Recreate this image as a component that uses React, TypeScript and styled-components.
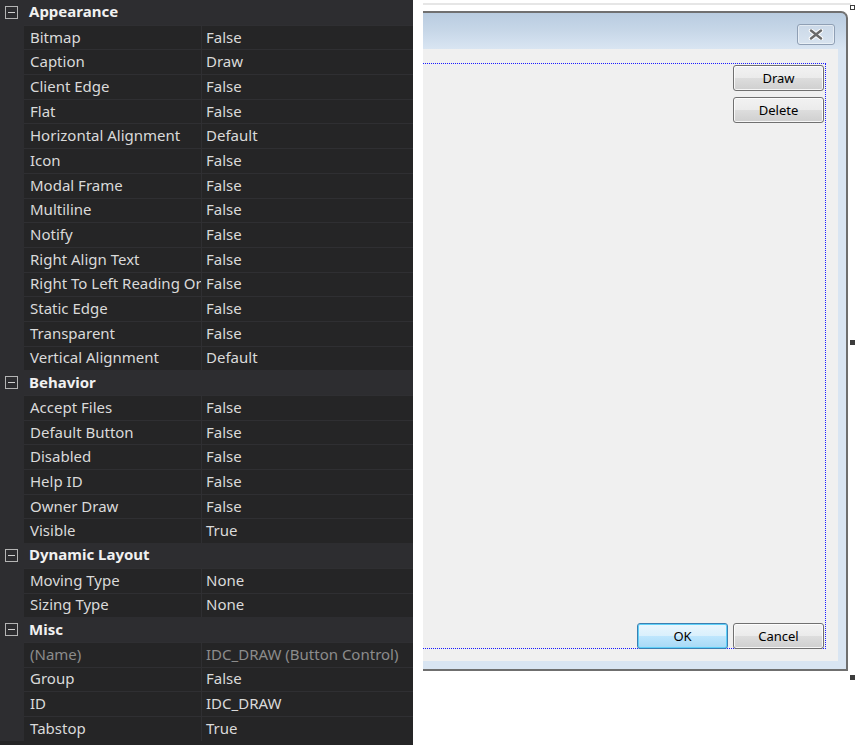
import React from 'react'
import styled, { createGlobalStyle } from 'styled-components'

const GlobalStyle = createGlobalStyle`
  html, body {
    margin: 0;
    padding: 0;
    background: #ffffff;
  }
  body {
    font-family: "Noto Sans", "Open Sans", sans-serif;
  }
`

type Prop = { name: string; value: string; dim?: boolean }
type Category = { title: string; props: Prop[] }

const categories: Category[] = [
  {
    title: 'Appearance',
    props: [
      { name: 'Bitmap', value: 'False' },
      { name: 'Caption', value: 'Draw' },
      { name: 'Client Edge', value: 'False' },
      { name: 'Flat', value: 'False' },
      { name: 'Horizontal Alignment', value: 'Default' },
      { name: 'Icon', value: 'False' },
      { name: 'Modal Frame', value: 'False' },
      { name: 'Multiline', value: 'False' },
      { name: 'Notify', value: 'False' },
      { name: 'Right Align Text', value: 'False' },
      { name: 'Right To Left Reading Order', value: 'False' },
      { name: 'Static Edge', value: 'False' },
      { name: 'Transparent', value: 'False' },
      { name: 'Vertical Alignment', value: 'Default' },
    ],
  },
  {
    title: 'Behavior',
    props: [
      { name: 'Accept Files', value: 'False' },
      { name: 'Default Button', value: 'False' },
      { name: 'Disabled', value: 'False' },
      { name: 'Help ID', value: 'False' },
      { name: 'Owner Draw', value: 'False' },
      { name: 'Visible', value: 'True' },
    ],
  },
  {
    title: 'Dynamic Layout',
    props: [
      { name: 'Moving Type', value: 'None' },
      { name: 'Sizing Type', value: 'None' },
    ],
  },
  {
    title: 'Misc',
    props: [
      { name: '(Name)', value: 'IDC_DRAW (Button Control)', dim: true },
      { name: 'Group', value: 'False' },
      { name: 'ID', value: 'IDC_DRAW' },
      { name: 'Tabstop', value: 'True' },
    ],
  },
]

const ROW_H = '24.7px'

const Page = styled.div`
  display: flex;
  width: 866px;
  height: 749px;
  overflow: hidden;
`

const PropertyGrid = styled.div`
  width: 413px;
  flex: none;
  align-self: flex-start;
  padding-bottom: 4px;
  background: #252526;
  color: #dadada;
  font-size: 15px;
`

const CategoryHeader = styled.div`
  display: flex;
  align-items: center;
  height: ${ROW_H};
  background: #2d2d30;
  font-weight: bold;
  color: #f1f1f1;
  box-sizing: border-box;
`

const Toggle = styled.span`
  width: 24px;
  flex: none;
  display: flex;
  justify-content: center;
  align-items: center;
  margin-left: -1px;
`

const ToggleBox = styled.span`
  position: relative;
  width: 11px;
  height: 11px;
  border: 1px solid #b4b4b4;
  &::after {
    content: '';
    position: absolute;
    left: 2px;
    right: 2px;
    top: 5px;
    height: 1px;
    background: #d0d0d0;
  }
`

const HeaderLabel = styled.span`
  padding-left: 6px;
  margin-top: -2px;
`

const PropRow = styled.div<{ $dim?: boolean }>`
  display: grid;
  grid-template-columns: 24px 178px 1fr;
  height: ${ROW_H};
  color: ${({ $dim }) => ($dim ? '#8c8c8c' : '#dadada')};
`

const Gutter = styled.div`
  background: #2d2d30;
`

const Cell = styled.div`
  display: flex;
  align-items: center;
  padding-bottom: 2px;
  white-space: nowrap;
  overflow: hidden;
  border-top: 1px solid #2f2f32;
  box-sizing: border-box;
`

const NameCell = styled(Cell)`
  padding-left: 6px;
  border-right: 1px solid #2f2f32;
`

const ValueCell = styled(Cell)`
  padding-left: 4px;
`

const DesignArea = styled.div`
  flex: 1;
  position: relative;
  padding-left: 10px;
  display: flex;
  flex-direction: column;
`

const TopRule = styled.div`
  height: 2px;
  margin-top: 3px;
  margin-right: 15px;
  background: #e6e6e6;
`

const Dialog = styled.div`
  margin-top: 6px;
  width: 425px;
  height: 660px;
  box-sizing: border-box;
  display: flex;
  flex-direction: column;
  border-top: 2px solid #707070;
  border-right: 2px solid #6f6f6f;
  border-bottom: 2px solid #6f6f6f;
  border-top-right-radius: 7px;
  padding: 0 8px 8px 0;
  background: linear-gradient(#b9cce0 0px, #c7d7e8 18px, #d9e5f2 36px, #d9e5f2 100%);
`

const TitleBar = styled.div`
  height: 36px;
  flex: none;
  display: flex;
  justify-content: flex-end;
  align-items: flex-start;
  padding-top: 11px;
  padding-right: 3px;
  box-sizing: border-box;
`

const CloseButton = styled.div`
  width: 38px;
  height: 21px;
  box-sizing: border-box;
  border: 1px solid #8f9fb4;
  border-radius: 3px;
  box-shadow: inset 0 0 0 1px rgba(255, 255, 255, 0.45);
  background: linear-gradient(#cbd9e8, #d8e3ef);
  display: flex;
  justify-content: center;
  align-items: center;
`

const Client = styled.div`
  flex: 1;
  display: flex;
  background: #f0f0f0;
  padding: 14px 12px 12px 0;
`

const Guide = styled.div`
  flex: 1;
  display: flex;
  flex-direction: column;
  justify-content: space-between;
  border-top: 1px dotted #1a1aff;
  border-right: 1px dotted #1a1aff;
  border-bottom: 1px dotted #1a1aff;
  padding: 1px 1px 0 0;
`

const ButtonStack = styled.div`
  display: flex;
  flex-direction: column;
  align-items: flex-end;
  gap: 6px;
`

const ButtonRow = styled.div`
  display: flex;
  justify-content: flex-end;
  gap: 5px;
  margin-bottom: -1px;
`

const PushButton = styled.div<{ $default?: boolean }>`
  width: 91px;
  height: 26px;
  box-sizing: border-box;
  display: flex;
  justify-content: center;
  align-items: center;
  font-size: 13px;
  color: #000;
  border-radius: 3px;
  border: 1px solid ${({ $default }) => ($default ? '#3c7fb1' : '#707070')};
  box-shadow: inset 0 0 0 1px ${({ $default }) => ($default ? '#5fd0f8' : 'rgba(255,255,255,0.8)')};
  background: ${({ $default }) =>
    $default
      ? 'linear-gradient(#eaf6fd 0%, #d9f0fc 50%, #bee6fd 51%, #a7d9f5 100%)'
      : 'linear-gradient(#f2f2f2 0%, #ebebeb 50%, #dddddd 51%, #cfcfcf 100%)'};
`

const Handle = styled.div<{ $hollow?: boolean; $top: number }>`
  position: absolute;
  left: 437px;
  top: ${({ $top }) => $top}px;
  width: 5px;
  height: 5px;
  box-sizing: border-box;
  background: ${({ $hollow }) => ($hollow ? '#ffffff' : '#3c3c3c')};
  border: 1px solid #3c3c3c;
`

const CloseGlyph = () => (
  <svg width="16" height="11" viewBox="0 0 16 11">
    <path d="M3 1.5 L13 9.5 M13 1.5 L3 9.5" stroke="#ffffff" strokeWidth="4.4" strokeLinecap="round" />
    <path d="M3 1.5 L13 9.5 M13 1.5 L3 9.5" stroke="#6a6a6a" strokeWidth="2.4" strokeLinecap="round" />
  </svg>
)

export default function App() {
  return (
    <>
      <GlobalStyle />
      <Page>
        <PropertyGrid>
          {categories.map((cat) => (
            <React.Fragment key={cat.title}>
              <CategoryHeader>
                <Toggle>
                  <ToggleBox />
                </Toggle>
                <HeaderLabel>{cat.title}</HeaderLabel>
              </CategoryHeader>
              {cat.props.map((p) => (
                <PropRow key={p.name} $dim={p.dim}>
                  <Gutter />
                  <NameCell>{p.name}</NameCell>
                  <ValueCell>{p.value}</ValueCell>
                </PropRow>
              ))}
            </React.Fragment>
          ))}
        </PropertyGrid>
        <DesignArea>
          <TopRule />
          <Dialog>
            <TitleBar>
              <CloseButton>
                <CloseGlyph />
              </CloseButton>
            </TitleBar>
            <Client>
              <Guide>
                <ButtonStack>
                  <PushButton>Draw</PushButton>
                  <PushButton>Delete</PushButton>
                </ButtonStack>
                <ButtonRow>
                  <PushButton $default>OK</PushButton>
                  <PushButton>Cancel</PushButton>
                </ButtonRow>
              </Guide>
            </Client>
          </Dialog>
          <Handle $hollow $top={5} />
          <Handle $top={340} />
          <Handle $top={675} />
        </DesignArea>
      </Page>
    </>
  )
}
